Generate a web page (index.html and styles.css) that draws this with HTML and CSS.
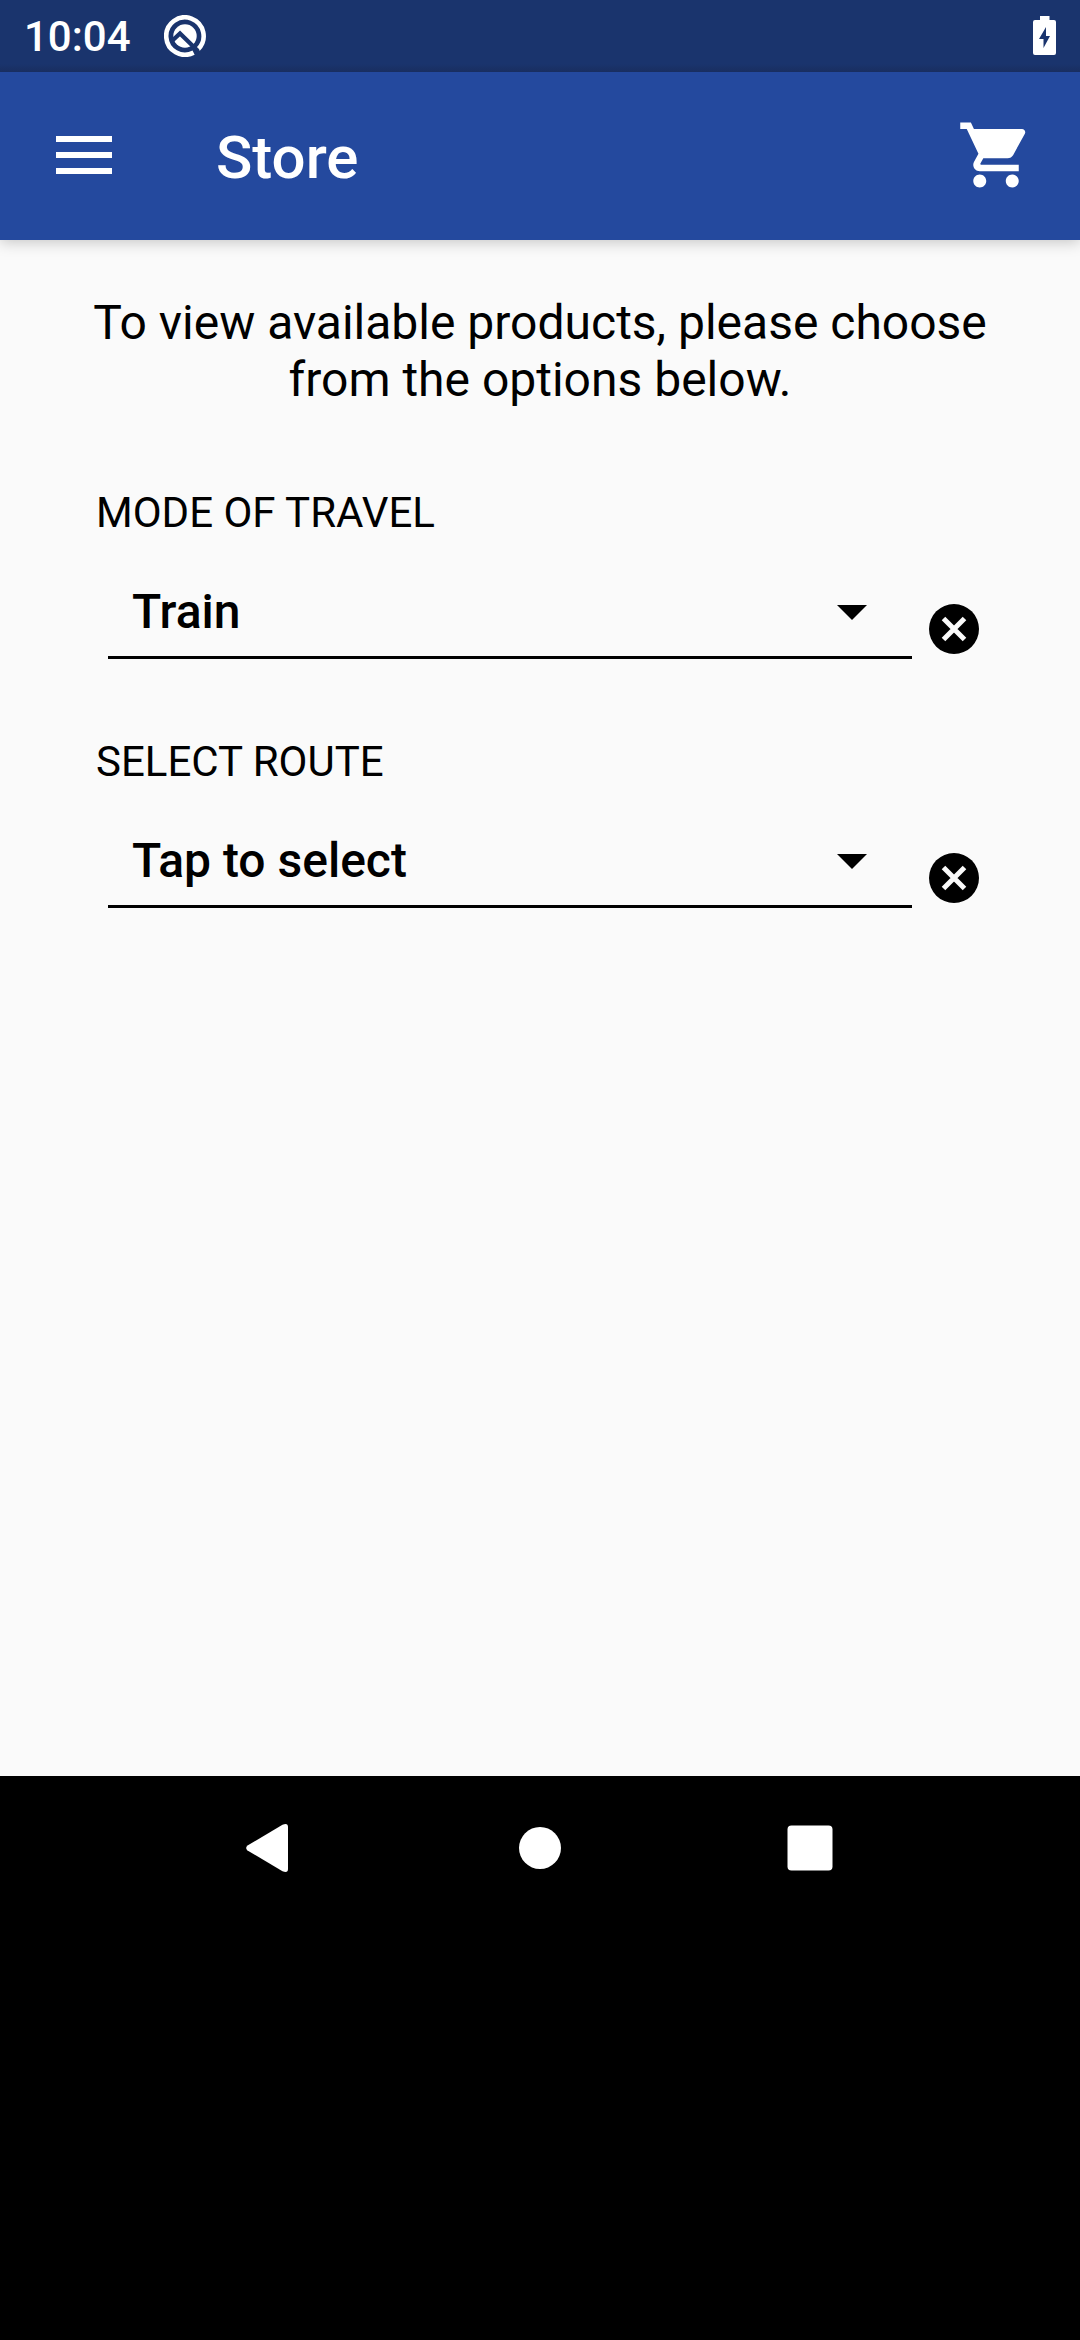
FILE: index.html
```html
<!DOCTYPE html>
<html lang="en">
<head>
<meta charset="utf-8">
<title>Store</title>
<link rel="stylesheet" href="styles.css">
</head>
<body>
<div class="status-bar">
  <span class="clock">10:04</span>
  <svg class="status-logo" viewBox="0 0 42 42" width="42" height="42">
    <path d="M34.2 34.2A18.7 18.7 0 1 0 29.6 37.6" fill="none" stroke="#fff" stroke-width="4.6"/>
    <circle cx="21" cy="21" r="11.7" fill="#fff"/>
    <path d="M9 25L16 18.5L34 36" fill="none" stroke="#1a346d" stroke-width="4.2"/>
  </svg>
  <svg class="battery" viewBox="0 0 23 39" width="23" height="39">
    <path d="M7 0h9.500v4H21a2 2 0 0 1 2 2v31a2 2 0 0 1-2 2H2a2 2 0 0 1-2-2V6a2 2 0 0 1 2-2h5z" fill="#fff"/>
    <path d="M13 11v9h4L10.500 32v-9H6z" fill="#1a346d"/>
  </svg>
</div>
<header class="app-bar">
  <svg class="menu" viewBox="0 0 56 38" width="56" height="38"><path d="M0 0h56v6H0zM0 16h56v6H0zM0 32h56v6H0z" fill="#fff"/></svg>
  <h1 class="title">Store</h1>
  <svg class="cart" viewBox="0 0 24 24" width="78" height="78"><path fill="#fff" d="M7 18c-1.100 0-1.990.9-1.990 2S5.900 22 7 22s2-.9 2-2-.9-2-2-2zM1 2v2h2l3.600 7.590-1.350 2.450c-.16.280-.25.610-.25.960 0 1.100.9 2 2 2h12v-2H7.420c-.14 0-.25-.11-.25-.25l.03-.12.900-1.630h7.450c.75 0 1.410-.41 1.750-1.030l3.580-6.490c.08-.14.120-.31.120-.48 0-.55-.45-1-1-1H5.210l-.94-2H1zm16 16c-1.100 0-1.990.9-1.990 2s.89 2 1.990 2 2-.9 2-2-.9-2-2-2z"/></svg>
</header>
<main class="content">
  <p class="intro">To view available products, please choose<br>from the options below.</p>
  <section class="field">
    <div class="label">MODE OF TRAVEL</div>
    <div class="row">
      <div class="select"><span class="value">Train</span><svg class="arrow" viewBox="0 0 30 15" width="30" height="15"><path d="M0 0h30L15 15z"/></svg></div>
      <svg class="clear" viewBox="0 0 50 50" width="50" height="50"><circle cx="25" cy="25" r="25"/><path d="M14.500 14.500l21 21M35.500 14.500l-21 21" stroke="#fafafa" stroke-width="5"/></svg>
    </div>
  </section>
  <section class="field">
    <div class="label">SELECT ROUTE</div>
    <div class="row">
      <div class="select"><span class="value">Tap to select</span><svg class="arrow" viewBox="0 0 30 15" width="30" height="15"><path d="M0 0h30L15 15z"/></svg></div>
      <svg class="clear" viewBox="0 0 50 50" width="50" height="50"><circle cx="25" cy="25" r="25"/><path d="M14.500 14.500l21 21M35.500 14.500l-21 21" stroke="#fafafa" stroke-width="5"/></svg>
    </div>
  </section>
</main>
<nav class="nav-bar">
  <svg viewBox="0 0 48 48" width="48" height="48"><path d="M1.500 21.500L36.500 .8Q42 -1.500 42 3V45Q42 49.500 36.500 47.200L1.500 26.500Q-1.200 24 1.500 21.500z" fill="#fff"/></svg>
  <svg viewBox="0 0 48 48" width="48" height="48"><circle cx="24" cy="24" r="21" fill="#fff"/></svg>
  <svg viewBox="0 0 48 48" width="48" height="48"><rect x="1.500" y="1.500" width="45" height="45" rx="4" fill="#fff"/></svg>
</nav>
</body>
</html>
```
FILE: styles.css
```css
* { box-sizing: border-box; }
body {
  margin: 0;
  width: 1080px;
  height: 2340px;
  display: flex;
  flex-direction: column;
  background: #000;
  color: #000;
  font-family: Roboto, sans-serif;
  overflow: hidden;
}
svg { display: block; flex: none; }
.status-bar {
  height: 72px;
  flex: none;
  display: flex;
  align-items: flex-start;
  padding: 0 24px;
  background: linear-gradient(#1a346d 64px, #192e60 72px);
}
.clock {
  width: 140px;
  padding-top: 12px;
  font-size: 42px;
  line-height: 50px;
  font-weight: 500;
  color: #fff;
}
.status-logo { margin-top: 15px; }
.battery { margin: 16px 0 0 auto; }
.app-bar {
  height: 168px;
  flex: none;
  display: flex;
  align-items: flex-start;
  padding: 0 45px 0 56px;
  background: #24499e;
  box-shadow: 0 2px 14px rgba(0, 0, 0, .22);
  clip-path: inset(0 0 -30px 0);
  z-index: 1;
}
.menu { margin-top: 64px; }
.title {
  margin: 51px 0 0 104px;
  font-size: 60px;
  line-height: 70px;
  font-weight: 500;
  color: #fff;
}
.cart { margin: 44px 0 0 auto; }
.content {
  height: 1536px;
  flex: none;
  padding: 54px 90px 0 96px;
  background: #fafafa;
}
.intro {
  margin: 0 0 0 -6px;
  font-size: 48px;
  line-height: 57px;
  text-align: center;
  white-space: nowrap;
}
.field { height: 249px; }
.intro + .field { margin-top: 80px; }
.field + .field { height: 248px; }
.label {
  font-size: 42px;
  line-height: 50px;
}
.row {
  display: flex;
  align-items: flex-start;
  padding-left: 12px;
  margin-top: 45px;
}
.select {
  width: 804px;
  height: 76px;
  display: flex;
  justify-content: space-between;
  padding: 0 45px 0 24px;
  border-bottom: 3px solid #000;
}
.value {
  font-size: 48px;
  line-height: 57px;
  font-weight: 500;
}
.arrow { margin-top: 22px; }
.clear { margin: 21px 0 0 17px; }
.nav-bar {
  height: 144px;
  flex: none;
  display: flex;
  justify-content: space-between;
  padding: 48px 246px;
}
```
